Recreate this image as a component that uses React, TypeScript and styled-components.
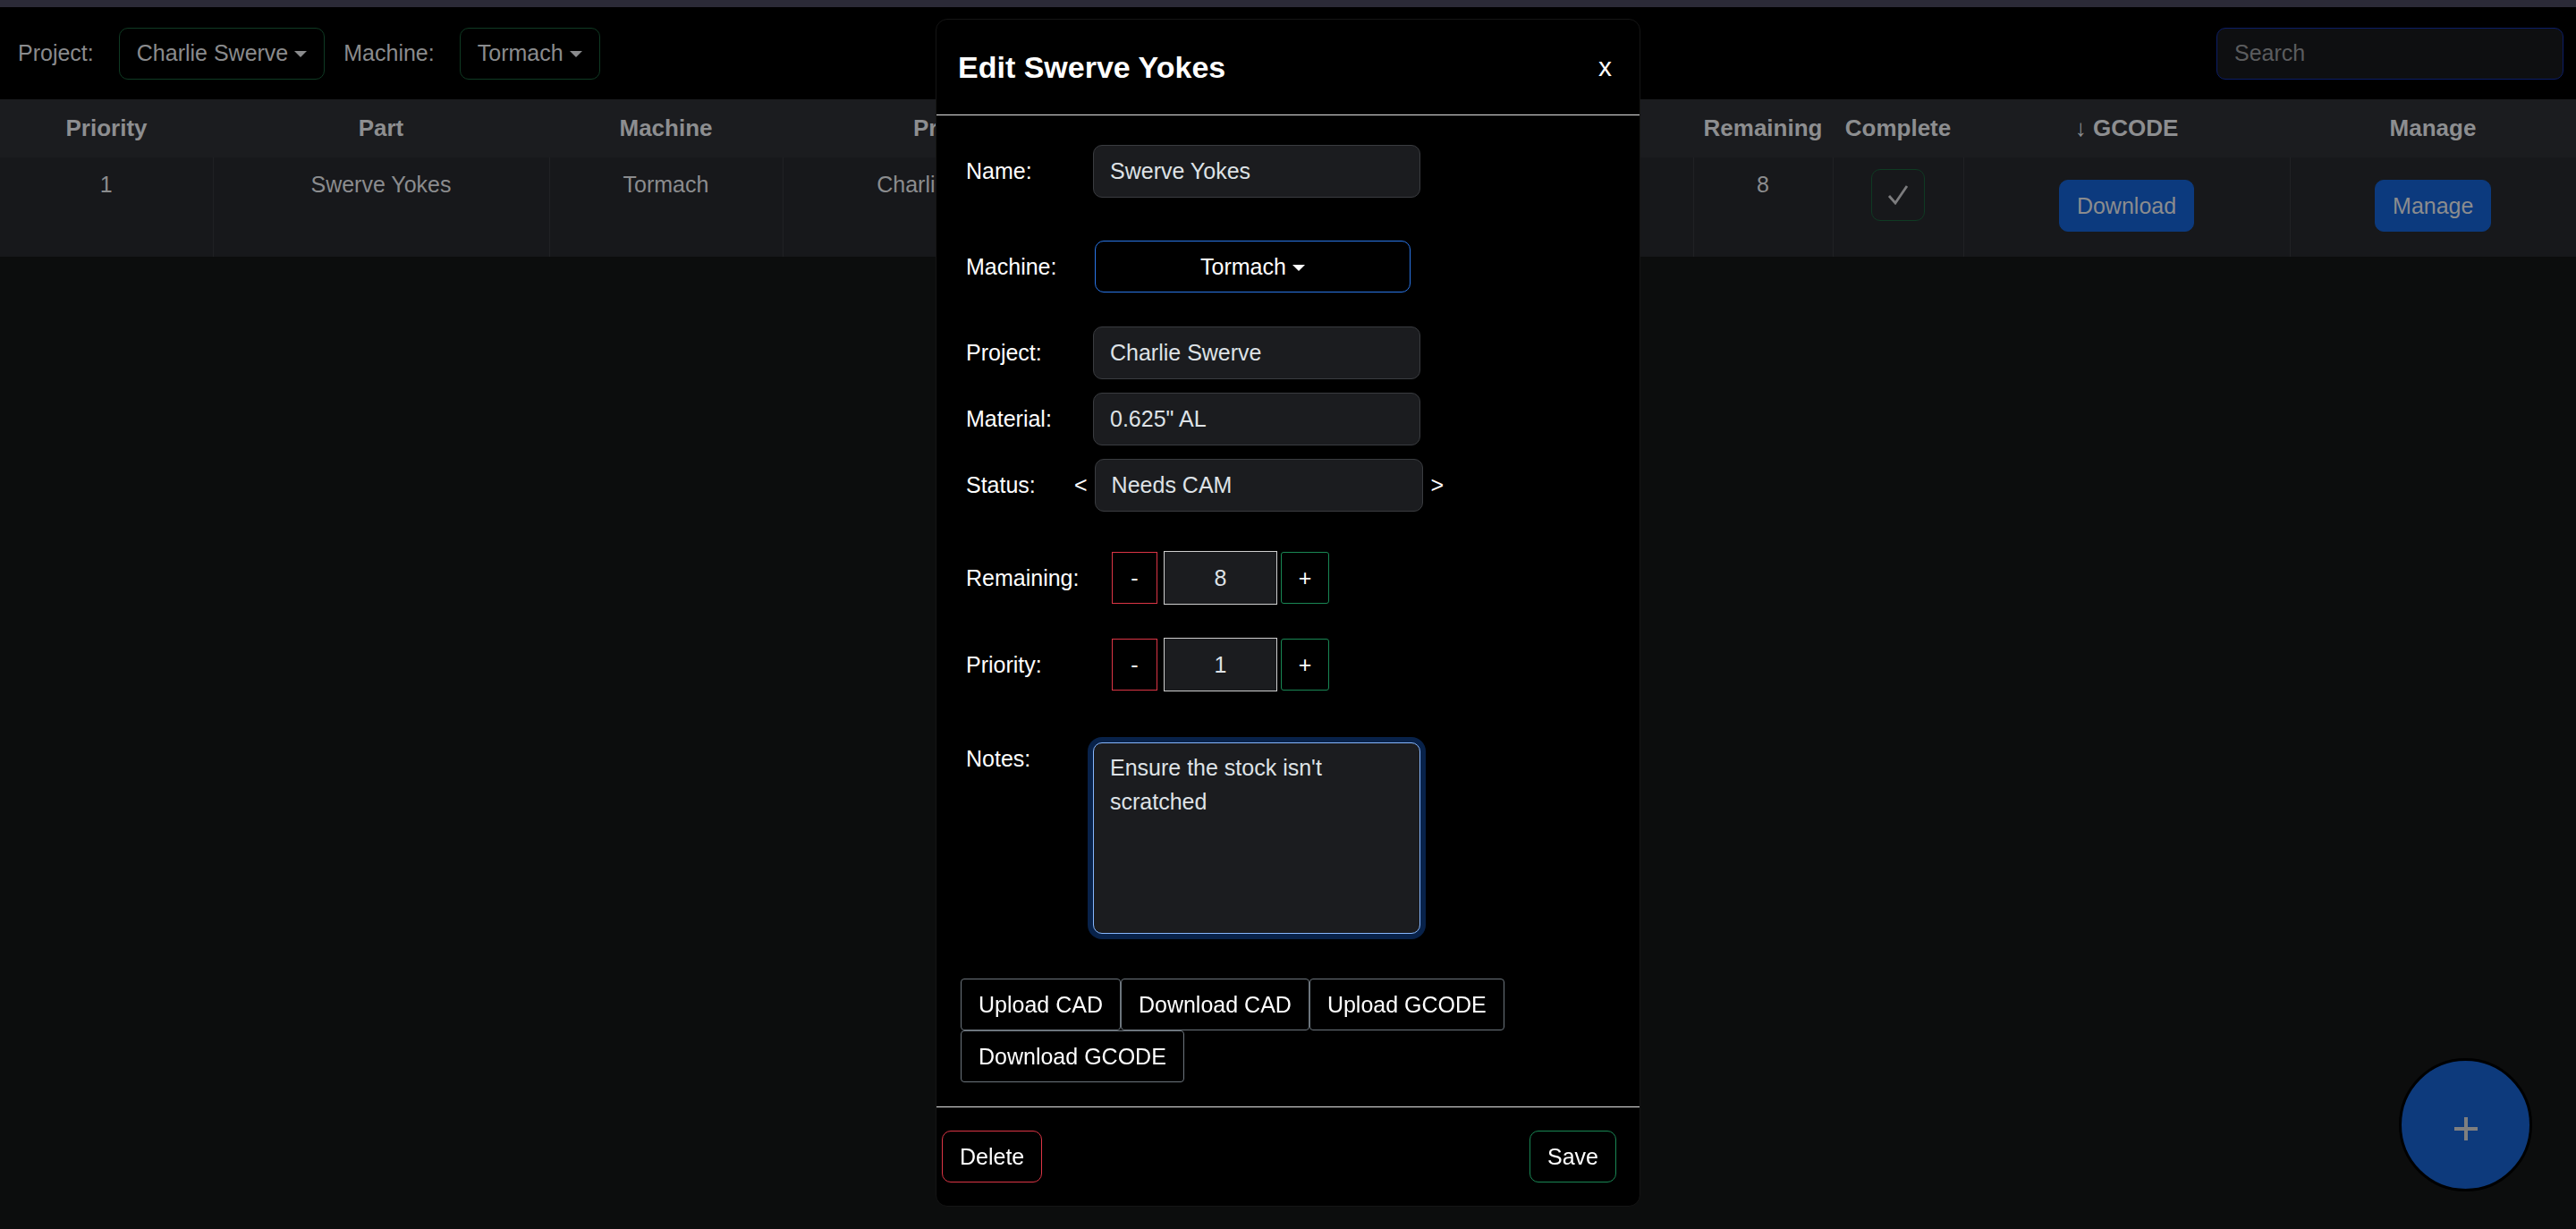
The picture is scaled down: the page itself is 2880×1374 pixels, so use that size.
import React, { useEffect, useRef } from "react";
import styled, { createGlobalStyle, css } from "styled-components";

const FONT = `"Liberation Sans", Arial, Helvetica, sans-serif`;

const GlobalStyle = createGlobalStyle`
  html, body { margin: 0; padding: 0; background: #0c0d0d; }
  body { font-family: ${FONT}; font-size: 25px; color: #dee2e6; overflow: hidden; }
  *, *::before, *::after { box-sizing: border-box; }
  button, input, textarea { font-family: inherit; font-size: inherit; }
`;

const caret = css`
  &::after {
    content: "";
    display: inline-block;
    margin-left: 7px;
    margin-top: 2px;
    border-top: 7px solid currentColor;
    border-left: 7px solid transparent;
    border-right: 7px solid transparent;
  }
`;

const Page = styled.div`
  min-height: 100vh;
  background: #0c0d0d;
  display: flex;
  flex-direction: column;
`;

const TopStrip = styled.div`
  height: 8px;
  flex-shrink: 0;
  background: #2b2a37;
`;

const Navbar = styled.nav`
  height: 103px;
  flex-shrink: 0;
  background: #000;
  display: flex;
  align-items: center;
  padding: 0 14px 0 20px;
`;

const NavLabel = styled.span`
  color: #8a8b8d;
  margin-right: 28px;
`;

const NavDropdown = styled.button`
  height: 58px;
  padding: 0 19px;
  margin-right: 21px;
  display: inline-flex;
  align-items: center;
  background: transparent;
  border: 1.5px solid #0f3a23;
  border-radius: 10px;
  color: #8a8b8d;
  ${caret}
`;

const SearchInput = styled.input`
  margin-left: auto;
  width: 388px;
  height: 58px;
  padding: 0 19px;
  background: #0e0f11;
  border: 1.5px solid #0c1d66;
  border-radius: 10px;
  color: #8a8b8d;
  outline: none;
  &::placeholder { color: #5b5c5e; }
`;

const Grid = styled.table`
  width: 100%;
  border-collapse: collapse;
  table-layout: fixed;
`;

const HeadCell = styled.th`
  height: 65px;
  padding: 0 6px;
  background: #1b1c1f;
  color: #8d8e90;
  font-size: 26px;
  font-weight: 700;
  text-align: center;
  white-space: nowrap;
`;

const Cell = styled.td`
  height: 111px;
  padding: 12px 6px 0;
  background: #17181b;
  color: #8b8c8e;
  text-align: center;
  vertical-align: top;
  line-height: 37px;
  white-space: nowrap;
  border-left: 1px solid #202124;
  &:first-child { border-left: none; }
`;

const CompleteBox = styled.button`
  width: 60px;
  height: 58px;
  margin-top: 1px;
  display: inline-flex;
  align-items: center;
  justify-content: center;
  vertical-align: top;
  background: transparent;
  border: 1.5px solid #0f3a23;
  border-radius: 10px;
`;

const RowAction = styled.button`
  height: 58px;
  margin-top: 13px;
  padding: 0 19px;
  display: inline-flex;
  align-items: center;
  vertical-align: top;
  background: #0c3a7e;
  border: 1.5px solid #0c3a7e;
  border-radius: 10px;
  color: #8b8c8e;
`;

const ModalLayer = styled.div`
  position: fixed;
  inset: 0;
  display: flex;
  justify-content: center;
  align-items: flex-start;
  padding-top: 21px;
  pointer-events: none;
`;

const ModalBox = styled.div`
  width: 788px;
  background: #000;
  border: 1px solid #151515;
  border-radius: 13px;
  color: #fff;
  display: flex;
  flex-direction: column;
  pointer-events: auto;
`;

const ModalHeader = styled.div`
  height: 107px;
  display: flex;
  align-items: center;
  justify-content: space-between;
  padding: 0 31px 0 24px;
  border-bottom: 1.5px solid #e4e4e4;
`;

const ModalTitle = styled.h5`
  margin: 0;
  font-size: 34px;
  font-weight: 700;
  line-height: 1.2;
`;

const CloseButton = styled.button`
  background: none;
  border: none;
  padding: 0;
  color: #fff;
  font-size: 30px;
  line-height: 1;
`;

const ModalBody = styled.div`
  padding: 33px 27px 27px 27px;
  display: flex;
  flex-direction: column;
`;

const FieldRow = styled.div<{ $gap?: number; $top?: boolean }>`
  display: flex;
  align-items: ${(p) => (p.$top ? "flex-start" : "center")};
  margin-top: ${(p) => p.$gap ?? 0}px;
  padding-left: 6px;
`;

const FieldLabel = styled.label<{ $w?: number }>`
  width: ${(p) => p.$w ?? 142}px;
  flex-shrink: 0;
  color: #fff;
  line-height: 37px;
`;

const TextInput = styled.input<{ $w?: number }>`
  width: ${(p) => p.$w ?? 366}px;
  height: 59px;
  padding: 0 18px;
  background: #1b1c1f;
  border: 1.5px solid #3a3c40;
  border-radius: 10px;
  color: #dee2e6;
  outline: none;
`;

const ModalDropdown = styled.button`
  width: 353px;
  height: 58px;
  margin-left: 2px;
  display: flex;
  align-items: center;
  justify-content: center;
  background: #000;
  border: 1.5px solid #2a76e8;
  border-radius: 10px;
  color: #fff;
  ${caret}
`;

const Arrow = styled.span<{ $side: "left" | "right" }>`
  color: #fff;
  margin: ${(p) => (p.$side === "left" ? "0 8px 0 0" : "0 0 0 9px")};
`;

const StepButton = styled.button<{ $tone: "minus" | "plus" }>`
  height: 58px;
  width: ${(p) => (p.$tone === "minus" ? 51 : 54)}px;
  padding: 0;
  background: transparent;
  color: #fff;
  border: 1.5px solid ${(p) => (p.$tone === "minus" ? "#dc3545" : "#198754")};
  border-radius: ${(p) => (p.$tone === "minus" ? 0 : 3)}px;
`;

const ValueBox = styled.input`
  width: 127px;
  height: 60px;
  margin: 0 4px 0 7px;
  text-align: center;
  background: #1b1c1f;
  border: 1.5px solid #cfcfcf;
  color: #dee2e6;
  outline: none;
`;

const NotesArea = styled.textarea`
  width: 366px;
  height: 214px;
  padding: 8px 18px;
  resize: none;
  background: #1b1c1f;
  border: 1.5px solid #86b7fe;
  border-radius: 10px;
  box-shadow: 0 0 0 6px #08224a;
  color: #dee2e6;
  line-height: 38px;
  outline: none;
`;

const FileButtons = styled.div`
  display: flex;
  flex-wrap: wrap;
  margin-top: 50px;
`;

const FileButton = styled.button`
  height: 58px;
  padding: 0 19px;
  background: transparent;
  border: 1.5px solid #6c757d;
  border-radius: 4px;
  color: #fff;
`;

const ModalFooter = styled.div`
  display: flex;
  justify-content: space-between;
  align-items: center;
  padding: 26px 26px 26px 6px;
  border-top: 1.5px solid #e4e4e4;
`;

const FooterButton = styled.button<{ $tone: "danger" | "success" }>`
  height: 58px;
  padding: 0 19px;
  background: transparent;
  color: #fff;
  border: 1.5px solid ${(p) => (p.$tone === "danger" ? "#dc3545" : "#198754")};
  border-radius: 10px;
`;

const Fab = styled.button`
  position: fixed;
  right: 49px;
  bottom: 42px;
  width: 149px;
  height: 149px;
  padding: 0;
  border-radius: 50%;
  background: #0d3a7c;
  border: 3px solid #000;
  display: flex;
  align-items: center;
  justify-content: center;
  & > svg { margin-top: 8px; }
`;

const columns = [
  { title: "Priority", w: 238 },
  { title: "Part", w: 376 },
  { title: "Machine", w: 261 },
  { title: "Project", w: 380 },
  { title: "Material", w: 319 },
  { title: "Status", w: 319 },
  { title: "Remaining", w: 156 },
  { title: "Complete", w: 146 },
  { title: "\u2193 GCODE", w: 365 },
  { title: "Manage", w: 320 },
];

export default function App() {
  const notesRef = useRef<HTMLTextAreaElement>(null);
  useEffect(() => {
    const el = notesRef.current;
    if (el) {
      el.focus();
      const n = el.value.length;
      el.setSelectionRange(n, n);
    }
  }, []);

  return (
    <>
      <GlobalStyle />
      <Page>
        <TopStrip />
        <Navbar>
          <NavLabel>Project:</NavLabel>
          <NavDropdown>Charlie Swerve</NavDropdown>
          <NavLabel>Machine:</NavLabel>
          <NavDropdown>Tormach</NavDropdown>
          <SearchInput placeholder="Search" />
        </Navbar>
        <Grid>
          <colgroup>
            {columns.map((c) => (
              <col key={c.title} style={{ width: c.w }} />
            ))}
          </colgroup>
          <thead>
            <tr>
              {columns.map((c) => (
                <HeadCell key={c.title}>{c.title}</HeadCell>
              ))}
            </tr>
          </thead>
          <tbody>
            <tr>
              <Cell>1</Cell>
              <Cell>Swerve Yokes</Cell>
              <Cell>Tormach</Cell>
              <Cell>Charlie Swerve</Cell>
              <Cell>0.625" AL</Cell>
              <Cell>Needs CAM</Cell>
              <Cell>8</Cell>
              <Cell>
                <CompleteBox aria-label="complete">
                  <svg width="24" height="22" viewBox="0 0 24 22">
                    <polyline points="2,12 9,20 22,1" fill="none" stroke="#7c7c7e" strokeWidth="2.8" />
                  </svg>
                </CompleteBox>
              </Cell>
              <Cell>
                <RowAction>Download</RowAction>
              </Cell>
              <Cell>
                <RowAction>Manage</RowAction>
              </Cell>
            </tr>
          </tbody>
        </Grid>
      </Page>

      <ModalLayer>
        <ModalBox>
          <ModalHeader>
            <ModalTitle>Edit Swerve Yokes</ModalTitle>
            <CloseButton>x</CloseButton>
          </ModalHeader>
          <ModalBody>
            <FieldRow>
              <FieldLabel>Name:</FieldLabel>
              <TextInput defaultValue="Swerve Yokes" />
            </FieldRow>
            <FieldRow $gap={48}>
              <FieldLabel>Machine:</FieldLabel>
              <ModalDropdown>Tormach</ModalDropdown>
            </FieldRow>
            <FieldRow $gap={38}>
              <FieldLabel>Project:</FieldLabel>
              <TextInput defaultValue="Charlie Swerve" />
            </FieldRow>
            <FieldRow $gap={15}>
              <FieldLabel>Material:</FieldLabel>
              <TextInput defaultValue={'0.625" AL'} />
            </FieldRow>
            <FieldRow $gap={15}>
              <FieldLabel $w={121}>Status:</FieldLabel>
              <Arrow $side="left">&lt;</Arrow>
              <TextInput $w={367} defaultValue="Needs CAM" />
              <Arrow $side="right">&gt;</Arrow>
            </FieldRow>
            <FieldRow $gap={44}>
              <FieldLabel $w={163}>Remaining:</FieldLabel>
              <StepButton $tone="minus">-</StepButton>
              <ValueBox defaultValue="8" />
              <StepButton $tone="plus">+</StepButton>
            </FieldRow>
            <FieldRow $gap={37}>
              <FieldLabel $w={163}>Priority:</FieldLabel>
              <StepButton $tone="minus">-</StepButton>
              <ValueBox defaultValue="1" />
              <StepButton $tone="plus">+</StepButton>
            </FieldRow>
            <FieldRow $gap={57} $top>
              <FieldLabel>Notes:</FieldLabel>
              <NotesArea ref={notesRef} defaultValue="Ensure the stock isn't scratched" />
            </FieldRow>
            <FileButtons>
              <FileButton>Upload CAD</FileButton>
              <FileButton>Download CAD</FileButton>
              <FileButton>Upload GCODE</FileButton>
              <FileButton>Download GCODE</FileButton>
            </FileButtons>
          </ModalBody>
          <ModalFooter>
            <FooterButton $tone="danger">Delete</FooterButton>
            <FooterButton $tone="success">Save</FooterButton>
          </ModalFooter>
        </ModalBox>
      </ModalLayer>

      <Fab aria-label="add">
        <svg width="28" height="28" viewBox="0 0 28 28">
          <line x1="14" y1="1" x2="14" y2="27" stroke="#7f7f7f" strokeWidth="4" />
          <line x1="1" y1="14" x2="27" y2="14" stroke="#7f7f7f" strokeWidth="4" />
        </svg>
      </Fab>
    </>
  );
}
